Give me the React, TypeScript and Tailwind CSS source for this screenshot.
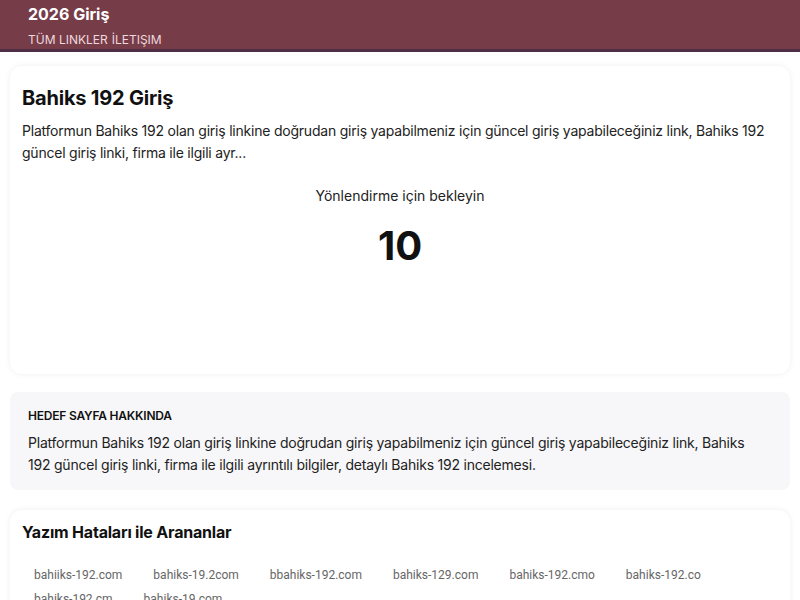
import React from 'react';

const typos = [
  'bahiiks-192.com',
  'bahiks-19.2com',
  'bbahiks-192.com',
  'bahiks-129.com',
  'bahiks-192.cmo',
  'bahiks-192.co',
  'bahiks-192.cm',
  'bahiks-19.com',
];

export default function App() {
  return (
    <div className="min-h-screen bg-white text-[#111] font-['Inter',sans-serif]">
      {/* Üst menü */}
      <header className="h-[52px] bg-[#763d49] border-b-[3px] border-[#4f2f47] px-[28px] flex flex-col">
        <div className="text-white text-[16px] font-bold leading-none mt-[6px]">2026 Giriş</div>
        <nav className="flex gap-[4px] mt-[12px] text-[12px] leading-none text-[#f0d8dd]">
          <a href="#">TÜM LINKLER</a>
          <a href="#">İLETIŞIM</a>
        </nav>
      </header>

      <main className="px-[10px] pt-[14px] flex flex-col">
        {/* Yönlendirme kartı */}
        <section className="rounded-xl bg-white shadow-[0_0_6px_rgba(0,0,0,0.07)] px-[12px] pt-[20px] h-[308px]">
          <h1 className="text-[20px] font-bold leading-[24px] tracking-[-0.2px]">Bahiks 192 Giriş</h1>
          <p className="mt-[10px] text-[14px] leading-[22px] text-[#222] tracking-[-0.22px]">
            Platformun Bahiks 192 olan giriş linkine doğrudan giriş yapabilmeniz için güncel giriş yapabileceğiniz link, Bahiks 192 güncel giriş linki, firma ile ilgili ayr...
          </p>
          <div className="mt-[22px] text-center text-[14px] leading-[20px] text-[#222]">Yönlendirme için bekleyin</div>
          <div className="mt-[18px] text-center text-[40px] font-bold leading-[44px]">10</div>
        </section>

        {/* Hedef sayfa */}
        <section className="mt-[18px] rounded-lg bg-[#f7f7f9] pl-[18px] pr-[24px] pt-[16px] pb-[14px]">
          <h2 className="text-[12px] font-semibold leading-[16px] tracking-[-0.2px]">HEDEF SAYFA HAKKINDA</h2>
          <p className="mt-[8px] text-[14px] leading-[22px] text-[#222] tracking-[-0.22px]">
            Platformun Bahiks 192 olan giriş linkine doğrudan giriş yapabilmeniz için güncel giriş yapabileceğiniz link, Bahiks 192 güncel giriş linki, firma ile ilgili ayrıntılı bilgiler, detaylı Bahiks 192 incelemesi.
          </p>
        </section>

        {/* Yazım hataları */}
        <section className="mt-[20px] rounded-xl bg-white shadow-[0_0_6px_rgba(0,0,0,0.07)] px-[12px] pt-[12px] pb-[12px]">
          <h2 className="text-[16px] font-bold leading-[20px] tracking-[-0.2px]">Yazım Hataları ile Arananlar</h2>
          <div className="mt-[23px] flex flex-wrap gap-x-[7px] gap-y-[4px]">
            {typos.map((t) => (
              <a key={t} href="#" className="px-[12px] text-[12px] leading-[20px] text-[#666] font-['Roboto',sans-serif]">
                {t}
              </a>
            ))}
          </div>
        </section>
      </main>
    </div>
  );
}
